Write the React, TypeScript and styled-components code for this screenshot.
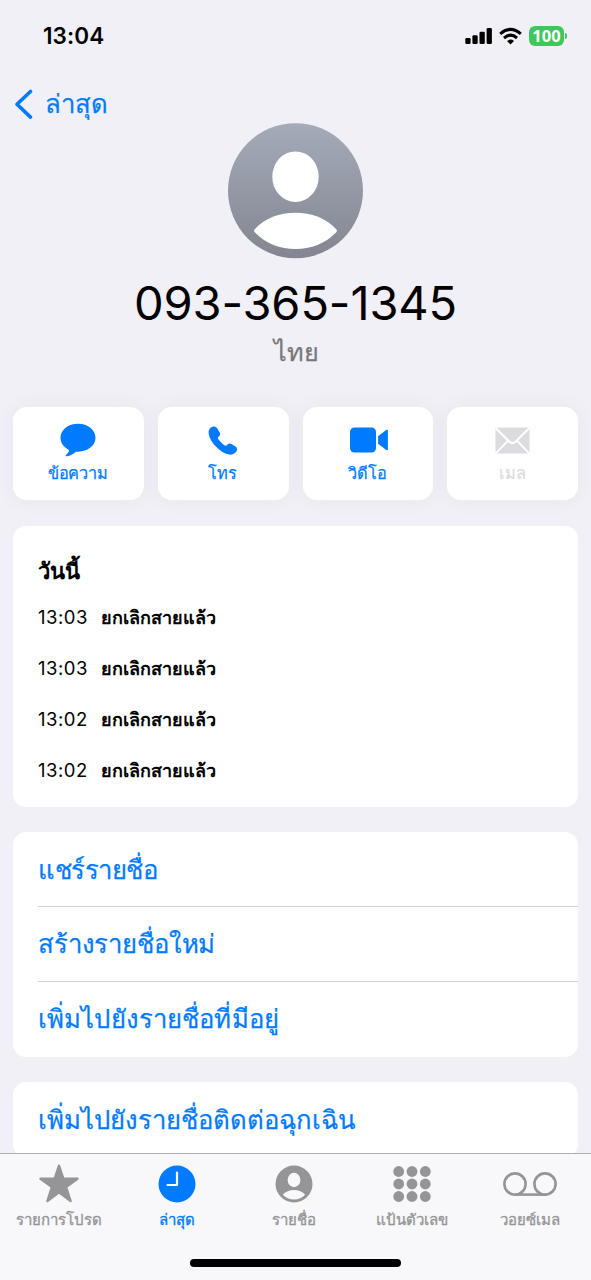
import React from "react";
import styled, { createGlobalStyle } from "styled-components";

const BLUE = "#007aff";
const GRAY = "#959597";

const GlobalStyle = createGlobalStyle`
  * { box-sizing: border-box; }
  body {
    margin: 0;
    background: #f1f0f6;
    font-family: Inter, sans-serif;
    color: #000;
  }
`;

const Screen = styled.div`
  width: 591px;
  height: 1280px;
  display: flex;
  flex-direction: column;
  overflow: hidden;
  background: #f1f0f6;
`;

const Content = styled.main`
  height: 1153px;
  flex: none;
  overflow: hidden;
`;

const StatusBar = styled.header`
  height: 70px;
  padding: 1px 24px 0 43px;
  display: flex;
  align-items: center;
  justify-content: space-between;
`;

const Clock = styled.time`
  font-size: 22.5px;
  font-weight: 600;
  letter-spacing: 0.1px;
  line-height: 30px;
`;

const StatusIcons = styled.div`
  display: flex;
  align-items: center;
  gap: 6px;
`;

const Battery = styled.div`
  margin-left: 1px;
  display: flex;
  align-items: center;
  gap: 1px;
  &::after {
    content: "";
    width: 2px;
    height: 6px;
    border-radius: 0 2px 2px 0;
    background: #3ec75b;
  }
`;

const BatteryLevel = styled.span`
  width: 35px;
  height: 20px;
  border-radius: 6px;
  background: #3ec75b;
  color: #fff;
  font: 700 16.5px/19px "Open Sans", sans-serif;
  text-align: center;
`;

const NavBar = styled.nav`
  height: 53px;
  padding: 18px 0 0 13px;
`;

const BackLink = styled.a`
  height: 32px;
  display: flex;
  align-items: center;
  gap: 12px;
  color: ${BLUE};
`;

const Label = styled.span<{ $size: number; $spacing?: number; $weight?: number }>`
  font-size: ${(p) => p.$size}px;
  letter-spacing: ${(p) => p.$spacing ?? 0}px;
  font-weight: ${(p) => p.$weight ?? 400};
  line-height: 1.4;
  white-space: nowrap;
`;

const LinkLabel = styled(Label)`
  -webkit-text-stroke: 0.25px currentColor;
`;

const TabLabel = styled(Label)`
  -webkit-text-stroke: 0.35px currentColor;
`;

const Profile = styled.section`
  height: 284px;
  display: flex;
  flex-direction: column;
  align-items: center;
`;

const PhoneNumber = styled.h1`
  margin: 14px 0 0;
  font-size: 47px;
  font-weight: 400;
  line-height: 60px;
  letter-spacing: -0.1px;
`;

const Country = styled.div`
  height: 39px;
  padding-left: 2px;
  display: flex;
  align-items: center;
  color: #77777b;
`;

const Actions = styled.section`
  padding: 0 13px;
  height: 93px;
  display: grid;
  grid-template-columns: repeat(4, 1fr);
  gap: 14px;
`;

const ActionButton = styled.button<{ $disabled?: boolean }>`
  border: 0;
  padding: 14px 1px 0 0;
  border-radius: 14px;
  background: #fff;
  box-shadow: 0 0 22px rgba(60, 50, 100, 0.05);
  color: ${(p) => (p.$disabled ? "#dcdce0" : BLUE)};
  font-family: inherit;
  display: flex;
  flex-direction: column;
  align-items: center;
  gap: 3px;
`;

const ActionIcon = styled.span`
  height: 38px;
  display: flex;
  align-items: center;
`;

const Card = styled.section<{ $top: number }>`
  margin: ${(p) => p.$top}px 13px 0;
  border-radius: 13px;
  background: #fff;
`;

const CallLog = styled(Card)`
  height: 281px;
  padding: 25px 25px 0;
`;

const Day = styled.h2`
  margin: 0;
  height: 40px;
  display: flex;
  align-items: center;
`;

const Call = styled.div`
  height: 51.2px;
  display: flex;
  align-items: center;
  gap: 13px;
  &:nth-child(2) { margin-top: 0.6px; }
`;

const CallTime = styled.time`
  width: 50px;
  padding-bottom: 1px;
  font-size: 18.5px;
  line-height: 24px;
  letter-spacing: 0.5px;
`;

const LinkList = styled(Card)`
  padding-bottom: 1px;
`;

const LinkRow = styled.a`
  margin-left: 25px;
  height: 75px;
  display: flex;
  align-items: center;
  color: ${BLUE};
  &:first-child { height: 74px; padding-top: 1px; }
  & + & { border-top: 1px solid #d0d0d3; }
`;

const TabBar = styled.footer`
  height: 127px;
  border-top: 1px solid #aeaeb0;
  background: #f8f8fb;
`;

const Tabs = styled.div`
  width: 589px;
  height: 105px;
  display: grid;
  grid-template-columns: repeat(5, 1fr);
`;

const Tab = styled.a<{ $active?: boolean }>`
  padding-top: 7px;
  display: flex;
  flex-direction: column;
  align-items: center;
  gap: 2px;
  color: ${(p) => (p.$active ? BLUE : GRAY)};
`;

const TabIcon = styled.span`
  height: 46px;
  display: flex;
  align-items: center;
`;

const HomeIndicator = styled.div`
  width: 211px;
  height: 8px;
  margin: 0 auto;
  border-radius: 4px;
  background: #000;
`;

const SignalIcon = () => (
  <svg width="28" height="18" viewBox="0 0 28 18">
    <rect x="0.300" y="11" width="5.300" height="6" rx="1.300" />
    <rect x="7.400" y="8.300" width="5.300" height="8.700" rx="1.300" />
    <rect x="14.500" y="4.800" width="5.300" height="12.200" rx="1.300" />
    <rect x="21.600" y="1" width="5.300" height="16" rx="1.300" />
  </svg>
);

const WifiIcon = () => (
  <svg width="23" height="18" viewBox="0 0 23 18" fill="none" stroke="#000" strokeWidth="3">
    <path d="M1.200 6.900 Q11.500 -2.100 21.800 6.900" />
    <path d="M5 11 Q11.500 5.300 18 11" />
    <path d="M8 14 Q11.500 11.200 15 14 L11.500 17.400Z" fill="#000" stroke="none" />
  </svg>
);

const ChevronIcon = () => (
  <svg width="20" height="32" viewBox="0 0 20 32" fill="none" stroke="currentColor" strokeWidth="3.600" strokeLinecap="round" strokeLinejoin="round">
    <path d="M17.500 3.500 L4 16.300 L17.500 29.100" />
  </svg>
);

const Avatar = () => (
  <svg width="135" height="136" viewBox="0.500 0 135 136">
    <defs>
      <linearGradient id="avatar" x1="0" y1="0" x2="0" y2="1">
        <stop offset="0" stopColor="#a4abb9" />
        <stop offset="1" stopColor="#838690" />
      </linearGradient>
    </defs>
    <circle cx="68" cy="67.700" r="67.500" fill="url(#avatar)" />
    <ellipse cx="68" cy="53.700" rx="23.200" ry="25.300" fill="#fff" />
    <path d="M27.500 109.500C26.200 108.200 26.200 107.300 27.500 106C46 84.200 90 84.200 108.500 106C109.800 107.300 109.800 108.200 108.500 109.500C88 131.500 48 131.500 27.500 109.500Z" fill="#fff" />
  </svg>
);

const MessageIcon = () => (
  <svg width="36" height="34" viewBox="0 0 36 34" fill="currentColor">
    <path d="M18 .8C8 .8.5 7 .5 14.800c0 5 3 9.300 7.800 11.700 1 .6.8 1.500.2 2.600-.6 1.100-1.700 2-2.500 2.800-.7.7-.2 1.400.8 1.300 3.500-.3 6.600-2.300 8.700-4.200.5-.4 1-.4 1.600-.3h.9c10 0 17.500-6.200 17.500-13.900S28 .8 18 .8Z" />
  </svg>
);

const PhoneIcon = () => (
  <svg width="30" height="30" viewBox="0 -1 30 30" fill="currentColor">
    <path d="M3 1.500C5.200-.2 7.700.1 9 2l2.600 4.300c.9 1.500.6 2.800-.4 3.900l-.9.900c-.5.600-.5 1-.2 1.600.6 1.200 1.600 2.500 3 3.900 1.400 1.300 2.600 2.300 3.700 3 .6.4 1.200.3 1.700-.2l1-1c1.100-1.100 2.500-1.300 3.900-.4l4 2.500c2 1.300 2.300 3.400.9 5.100-1.900 2.500-4.400 3.300-7.100 3-4.200-.4-8.500-3.300-12.800-7.500C4.200 16.900 1.200 12 .7 7.700.4 5 1 3.100 3 1.500Z" />
  </svg>
);

const VideoIcon = () => (
  <svg width="41" height="26" viewBox="-2.500 0 41 26" fill="currentColor">
    <rect x=".5" y=".5" width="26" height="25" rx="4.500" />
    <path d="M28.600 9.200 36.400 3.300C37.600 2.400 38.400 2.800 38.400 4.100V21.900C38.400 23.200 37.600 23.600 36.400 22.700L28.600 16.800Z" />
  </svg>
);

const MailIcon = () => (
  <svg width="35" height="27" viewBox="0 0 35 27">
    <rect x=".5" y=".5" width="34" height="26" rx="1.500" fill="currentColor" />
    <g fill="none" stroke="#fff" strokeWidth="1.900">
      <path d="M.8 1.300 14.500 14.700Q17.500 17.500 20.500 14.700L34.200 1.300" />
      <path d="M.8 26.300 12.800 13.800M34.200 26.300 22.200 13.800" />
    </g>
  </svg>
);

const StarIcon = () => (
  <svg width="40" height="40" viewBox="0 0 40 40" fill="currentColor" stroke="currentColor" strokeWidth="2.400" strokeLinejoin="round">
    <path d="M20 1.700 24.300 14.700H38.500L27.100 23 31.600 37 20 28.400 8.400 37 12.900 23 1.500 14.700H15.700Z" />
  </svg>
);

const RecentsIcon = () => (
  <svg width="38" height="38" viewBox="0 0 38 38">
    <circle cx="19" cy="19" r="18.500" fill="currentColor" />
    <path d="M19 7.500V20H9.500" fill="none" stroke="#fff" strokeWidth="2.200" strokeLinecap="round" strokeLinejoin="round" />
  </svg>
);

const ContactIcon = () => (
  <svg width="38" height="38" viewBox="0 0 38 38">
    <circle cx="19" cy="19" r="18.500" fill="currentColor" />
    <ellipse cx="19" cy="15" rx="6.400" ry="7.200" fill="#f8f8fb" />
    <path d="M7.800 29.700C12.500 23.300 25.500 23.300 30.200 29.700C24.500 36 13.500 36 7.800 29.700Z" fill="#f8f8fb" />
  </svg>
);

const KeypadIcon = () => (
  <svg width="38" height="38" viewBox="0 0 38 38" fill="currentColor">
    {[6.5, 19, 31.5].map((cy) =>
      [5.7, 19, 32.3].map((cx) => <circle key={`${cx}-${cy}`} cx={cx} cy={cy} r="5.400" />)
    )}
  </svg>
);

const VoicemailIcon = () => (
  <svg width="54" height="26" viewBox="0 0 54 26" fill="none" stroke="currentColor" strokeWidth="2.600">
    <circle cx="12" cy="13" r="10.600" />
    <circle cx="42" cy="13" r="10.600" />
    <path d="M12 23.600H42" />
  </svg>
);

const actions = [
  { icon: <MessageIcon />, label: "ข้อความ" },
  { icon: <PhoneIcon />, label: "โทร" },
  { icon: <VideoIcon />, label: "วิดีโอ" },
  { icon: <MailIcon />, label: "เมล", disabled: true },
];

const calls = ["13:03", "13:03", "13:02", "13:02"];

const contactLinks = [
  { label: "แชร์รายชื่อ", spacing: -0.5 },
  { label: "สร้างรายชื่อใหม่", spacing: -0.15 },
  { label: "เพิ่มไปยังรายชื่อที่มีอยู่", spacing: 0.12 },
];

const tabs = [
  { icon: <StarIcon />, label: "รายการโปรด" },
  { icon: <RecentsIcon />, label: "ล่าสุด", active: true },
  { icon: <ContactIcon />, label: "รายชื่อ" },
  { icon: <KeypadIcon />, label: "แป้นตัวเลข" },
  { icon: <VoicemailIcon />, label: "วอยซ์เมล" },
];

export default function App() {
  return (
    <Screen>
      <GlobalStyle />
      <Content>
        <StatusBar>
          <Clock>13:04</Clock>
          <StatusIcons>
            <SignalIcon />
            <WifiIcon />
            <Battery>
              <BatteryLevel>100</BatteryLevel>
            </Battery>
          </StatusIcons>
        </StatusBar>
        <NavBar>
          <BackLink>
            <ChevronIcon />
            <LinkLabel $size={25.7}>ล่าสุด</LinkLabel>
          </BackLink>
        </NavBar>
        <Profile>
          <Avatar />
          <PhoneNumber>093-365-1345</PhoneNumber>
          <Country>
            <LinkLabel $size={25.2}>ไทย</LinkLabel>
          </Country>
        </Profile>
        <Actions>
          {actions.map((a) => (
            <ActionButton key={a.label} $disabled={a.disabled}>
              <ActionIcon>{a.icon}</ActionIcon>
              <LinkLabel $size={16.3} $spacing={-0.1}>{a.label}</LinkLabel>
            </ActionButton>
          ))}
        </Actions>
        <CallLog $top={26}>
          <Day>
            <Label $size={22} $weight={600}>วันนี้</Label>
          </Day>
          {calls.map((time, i) => (
            <Call key={i}>
              <CallTime>{time}</CallTime>
              <Label $size={18} $weight={600}>ยกเลิกสายแล้ว</Label>
            </Call>
          ))}
        </CallLog>
        <LinkList $top={25}>
          {contactLinks.map((l) => (
            <LinkRow key={l.label}>
              <LinkLabel $size={25.7} $spacing={l.spacing}>{l.label}</LinkLabel>
            </LinkRow>
          ))}
        </LinkList>
        <LinkList $top={25}>
          <LinkRow>
            <LinkLabel $size={25.7}>เพิ่มไปยังรายชื่อติดต่อฉุกเฉิน</LinkLabel>
          </LinkRow>
        </LinkList>
      </Content>
      <TabBar>
        <Tabs>
          {tabs.map((t) => (
            <Tab key={t.label} $active={t.active}>
              <TabIcon>{t.icon}</TabIcon>
              <TabLabel $size={15}>{t.label}</TabLabel>
            </Tab>
          ))}
        </Tabs>
        <HomeIndicator />
      </TabBar>
    </Screen>
  );
}
